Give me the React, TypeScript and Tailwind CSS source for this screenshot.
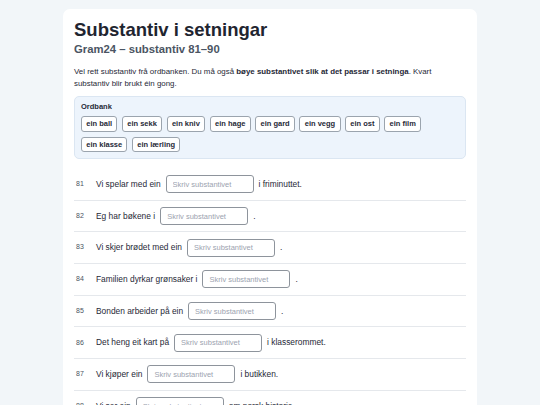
const words = [
  'ein ball', 'ein sekk', 'ein kniv', 'ein hage', 'ein gard',
  'ein vegg', 'ein ost', 'ein film', 'ein klasse', 'ein lærling',
];

const rows = [
  { n: 81, before: 'Vi spelar med ein', after: 'i friminuttet.' },
  { n: 82, before: 'Eg har bøkene i', after: '.' },
  { n: 83, before: 'Vi skjer brødet med ein', after: '.' },
  { n: 84, before: 'Familien dyrkar grønsaker i', after: '.' },
  { n: 85, before: 'Bonden arbeider på ein', after: '.' },
  { n: 86, before: 'Det heng eit kart på', after: 'i klasserommet.' },
  { n: 87, before: 'Vi kjøper ein', after: 'i butikken.' },
  { n: 88, before: 'Vi ser ein', after: 'om norsk historie.' },
  { n: 89, before: 'Læraren snakkar med ein', after: '.' },
  { n: 90, before: 'Eleven går i ein', after: 'på skulen.' },
];

export default function App() {
  return (
    <div
      className="min-h-screen bg-[#f2f6f9] pt-[9px] pb-6"
      style={{ fontFamily: '"Liberation Sans", Arial, sans-serif' }}
    >
      <div className="mx-auto w-[414px] rounded-[7px] bg-white px-[11px] pt-[10px] pb-4 text-[#1f2937]">
        <h1 className="text-[18.5px] font-bold leading-[22px] text-[#1f2530]">Substantiv i setningar</h1>
        <h2 className="mt-[2px] text-[11.3px] font-bold leading-[13px] text-[#4b5563]">Gram24 – substantiv 81–90</h2>
        <p className="mt-[10px] text-[7.9px] leading-[12px] text-[#1f2937]">
          Vel rett substantiv frå ordbanken. Du må også{' '}
          <b className="font-bold">bøye substantivet slik at det passar i setninga</b>. Kvart substantiv blir brukt éin gong.
        </p>

        <div className="mt-[6px] rounded-[5px] border border-[#dbe6f2] bg-[#edf4fc] px-[6px] pt-[5px] pb-[6px]">
          <p className="text-[7.5px] font-bold leading-[10px] text-[#1f2937]">Ordbank</p>
          <div className="mt-[4px] flex flex-wrap gap-x-[4.5px] gap-y-[5px]">
            {words.map((w) => (
              <span
                key={w}
                className="flex h-[15.5px] items-center rounded-[3px] border border-[#9ba4ae] bg-white px-[4.3px] text-[7.5px] font-bold text-[#1f2937]"
              >
                {w}
              </span>
            ))}
          </div>
        </div>

        <div className="mt-[10px]">
          {rows.map((r) => (
            <div key={r.n} className="flex h-[31.7px] items-center border-b border-[#e5e8ec] text-[8.4px] text-[#1f2937]">
              <span className="w-[22px] shrink-0 pl-[2px] text-[7px] text-[#4b5563]">{r.n}</span>
              <span>{r.before}</span>
              <input
                className="mx-[5px] h-[18px] w-[88px] rounded-[3px] border border-[#8e949c] bg-white px-[6px] text-[7.5px] text-[#1f2937] placeholder:text-[#9ca3af] outline-none"
                placeholder="Skriv substantivet"
              />
              <span>{r.after}</span>
            </div>
          ))}
        </div>
      </div>
    </div>
  );
}
